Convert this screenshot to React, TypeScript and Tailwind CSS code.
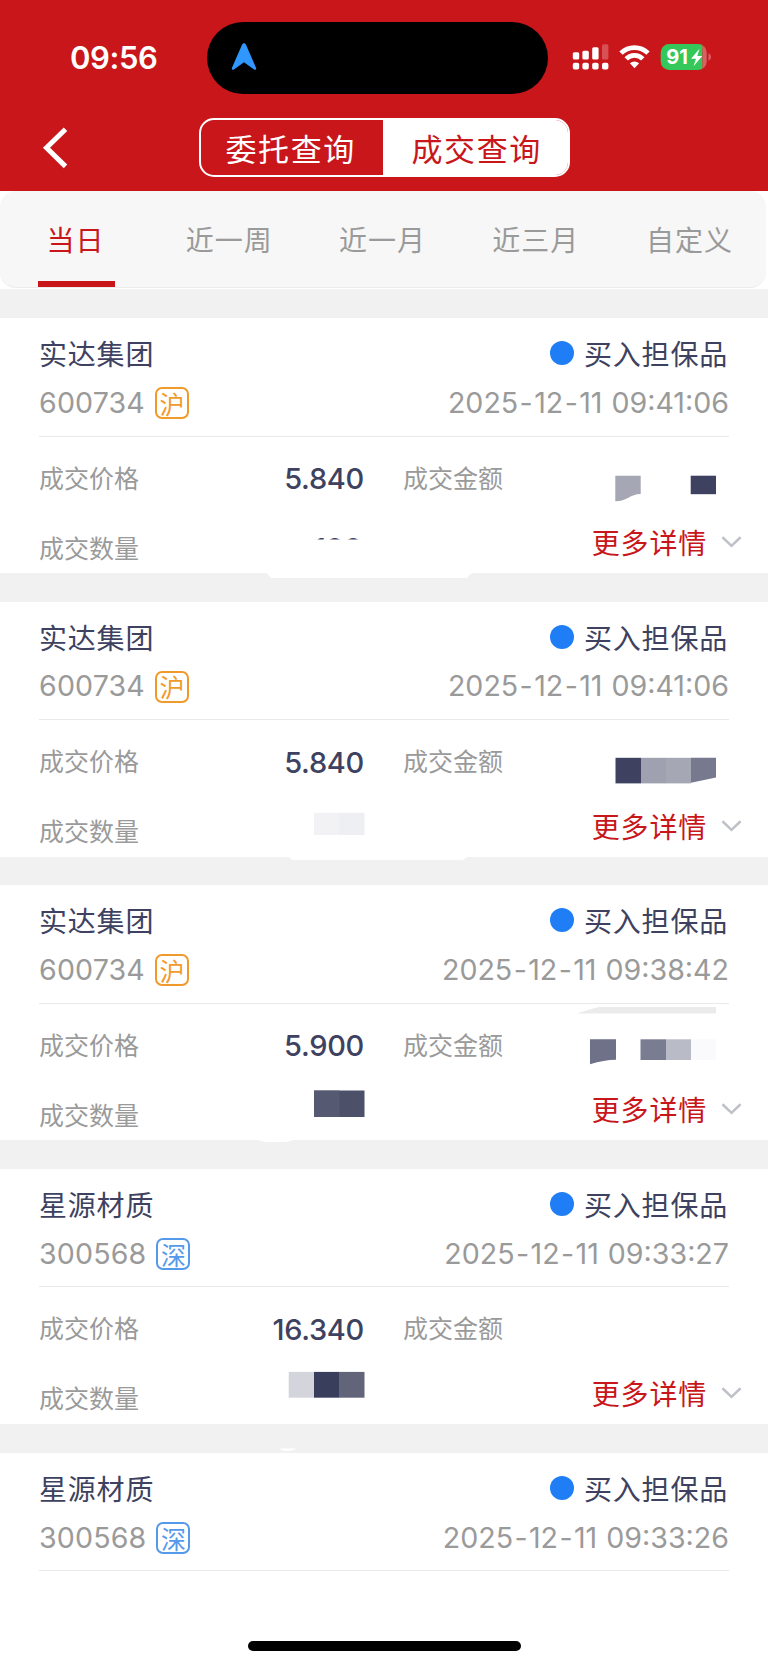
import clsx from 'clsx';

type Block = { d: string; fill: string };

type Trade = {
    id: number;
    name: string;
    code: string;
    market: '沪' | '深';
    date: string;
    time: string;
    price?: string;
    amount?: string;
    blocks: Block[];
};

const TABS = ['当日', '近一周', '近一月', '近三月', '自定义'];

// Coordinates of the masking blocks are relative to the card
const TRADES: Trade[] = [
    {
        id: 1,
        name: '实达集团',
        code: '600734',
        market: '沪',
        date: '2025-12-11',
        time: '09:41:06',
        price: '5.840',
        amount: '100',
        blocks: [
            { d: 'M615.3 157.7H640.7V176C630 176 627 183.3 615.3 183.3Z', fill: '#a5a7b5' },
            { d: 'M690.7 157.7H716V176.2H690.7Z', fill: '#3e4260' },
            { d: 'M265 254H474Q470 256 467 260H271Q268 256 265 254Z', fill: '#ffffff' },
            { d: 'M300 221.5H380V245H300Z', fill: '#ffffff' },
        ],
    },
    {
        id: 2,
        name: '实达集团',
        code: '600734',
        market: '沪',
        date: '2025-12-11',
        time: '09:41:06',
        price: '5.840',
        blocks: [
            { d: 'M615.5 155.8H641V181.4H615.5Z', fill: '#3e4260' },
            { d: 'M641 155.8H666V181.4H641Z', fill: '#9fa1b0' },
            { d: 'M666 155.8H691V181.4H666Z', fill: '#a5a7b4' },
            { d: 'M691 155.8H716V175.6L691 180.8Z', fill: '#777a8f' },
            { d: 'M314 210.8H339V233H314Z', fill: '#f2f2f5' },
            { d: 'M339 210.8H364.5V233H339Z', fill: '#eeeff2' },
            { d: 'M288 254H470Q466 255 463 258H293Q290 257 288 254Z', fill: '#ffffff' },
        ],
    },
    {
        id: 3,
        name: '实达集团',
        code: '600734',
        market: '沪',
        date: '2025-12-11',
        time: '09:38:42',
        price: '5.900',
        blocks: [
            { d: 'M576.5 128.5Q590 124 599 122H716V128.5Z', fill: '#ebebeb' },
            { d: 'M590 154.3H616V174.8Q604 175 590 179.3Z', fill: '#6e7187' },
            { d: 'M640.5 154.3H666V175H640.5Z', fill: '#7a7d92' },
            { d: 'M666 154.3H691V175H666Z', fill: '#b9bbc6' },
            { d: 'M691 154.3H716V175H691Z', fill: '#fafafc' },
            { d: 'M314 205.6H364.5V232H314Z', fill: '#4c5069' },
            { d: 'M314 205.6H339.5V232H314Z', fill: '#555972' },
            { d: 'M257 254H295Q290 257 285 257H265Q261 257 257 254Z', fill: '#ffffff' },
        ],
    },
    {
        id: 4,
        name: '星源材质',
        code: '300568',
        market: '深',
        date: '2025-12-11',
        time: '09:33:27',
        price: '16.340',
        blocks: [
            { d: 'M288.7 202.9H314V228.7H288.7Z', fill: '#d4d5dc' },
            { d: 'M314 202.9H339V228.7H314Z', fill: '#3a3e5d' },
            { d: 'M339 202.9H364.5V228.7H339Z', fill: '#626579' },
            { d: 'M279 279.5H296Q292 282 287 282Q283 282 279 279.5Z', fill: '#ffffff' },
        ],
    },
    {
        id: 5,
        name: '星源材质',
        code: '300568',
        market: '深',
        date: '2025-12-11',
        time: '09:33:26',
        blocks: [],
    },
];

function StatusBar() {
    return (
        <div className="flex h-[116px] items-start">
            <div className="w-[206.5px] pt-[37px] pl-[70px] font-['Inter'] text-[31px] leading-[42px] font-semibold tracking-[-0.4px] text-white">
                09:56
            </div>
            {/* Dynamic island */}
            <div className="mt-[22px] h-[72px] w-[341.5px] rounded-full bg-black pt-[20px] pl-[24px]">
                <svg className="h-[29px] w-[26px]" viewBox="0 0 26 29">
                    <path
                        d="M13 1.2C13.8 1.2 14.6 1.8 15 2.7L25.1 26C25.6 27.4 24.3 28.4 23.1 27.5L13 20.3L2.9 27.5C1.7 28.4 .4 27.4 .9 26L11 2.7C11.4 1.8 12.2 1.2 13 1.2Z"
                        fill="#2f97ff"
                    />
                </svg>
            </div>
            <div className="mt-[40px] ml-[22px] flex h-[34px]">
                {/* Dual SIM signal */}
                <svg className="h-[34px] w-[42px]" viewBox="0 0 42 34" fill="#fff">
                    <rect x="2.8" y="12.3" width="6.4" height="7.2" rx="1.5" />
                    <rect x="12.4" y="10.8" width="6.4" height="8.7" rx="1.5" />
                    <rect x="22.2" y="7.3" width="6.4" height="12.2" rx="1.5" />
                    <rect x="32" y="4.3" width="6.4" height="15.2" rx="1.5" opacity="0.25" />
                    <rect x="2.8" y="22.8" width="6.4" height="6.8" rx="1.8" />
                    <rect x="12.4" y="22.8" width="6.4" height="6.8" rx="1.8" />
                    <rect x="22.2" y="22.8" width="6.4" height="6.8" rx="1.8" />
                    <rect x="32" y="22.8" width="6.4" height="6.8" rx="1.8" />
                </svg>
                <svg className="ml-[6px] h-[34px] w-[34px]" viewBox="0 0 34 34" fill="none" stroke="#fff" strokeWidth="4.8">
                    <path d="M3 13.1A19.2 19.2 0 0 1 30 13.1" />
                    <path d="M8.2 18.9A11.6 11.6 0 0 1 24.8 18.9" />
                    <path d="M11.9 23.3A6.6 6.6 0 0 1 21.1 23.3L16.5 28.2Z" fill="#fff" stroke="none" />
                </svg>
                {/* Battery */}
                <svg className="ml-[7px] h-[34px] w-[54px]" viewBox="0 0 54 34">
                    <defs>
                        <clipPath id="battery">
                            <rect x="1.7" y="4" width="46" height="26" rx="8.5" />
                        </clipPath>
                    </defs>
                    <g clipPath="url(#battery)">
                        <rect x="1" y="4" width="42.5" height="26" fill="#34c759" />
                        <rect x="43.5" y="4" width="5" height="26" fill="#d95f62" />
                    </g>
                    <path d="M49.5 13Q52.1 14.5 52.1 17Q52.1 19.5 49.5 21Z" fill="#d95f62" />
                    <text x="7.3" y="24.2" className="font-['Inter'] text-[20px] font-bold" fill="#fff">
                        91
                    </text>
                    <path d="M40.5 8.8L32 18.7H37L34.5 26.3L43.3 16H38.3Z" fill="#fff" />
                </svg>
            </div>
        </div>
    );
}

function NavBar() {
    return (
        <div className="flex pt-[2px]">
            <svg className="mt-[8px] ml-[40px] h-[44px] w-[30px]" viewBox="0 0 30 44" fill="none" stroke="#fff" strokeWidth="5">
                <path d="M25.5 3.2L6.5 21.8L25.5 40.4" />
            </svg>
            <div className="ml-[128.5px] flex h-[59px] w-[371px] overflow-hidden rounded-[15px] border-2 border-white text-[31px] leading-[55px] tracking-[1.6px]">
                <div className="w-[182px] pl-[25px] text-white">委托查询</div>
                <div className="flex-1 bg-white pl-[29px] text-[#c8161b]">成交查询</div>
            </div>
        </div>
    );
}

function Tabs() {
    return (
        <div className="h-[98px] shrink-0 bg-white">
            <div className="flex h-[96.5px] w-[766px] rounded-[16px] border-b border-[#ececec] bg-[#f7f7f7]">
                {TABS.map((tab, i) => (
                    <div key={tab} className="flex w-[153.4px] flex-col items-center">
                        <div
                            className={clsx(
                                'h-[90px] pt-[27px] text-[28px] leading-[42px] tracking-[1px]',
                                i === 0 ? 'mr-[2px] text-[#c8161b]' : 'text-[#9a9a9a]',
                                i > 0 && i < 4 && 'mr-[1px]',
                            )}
                        >
                            {tab}
                        </div>
                        {i === 0 && <div className="h-[6px] w-[77px] bg-[#c8161b]" />}
                    </div>
                ))}
            </div>
        </div>
    );
}

function DateTime({ date, time }: { date: string; time: string }) {
    return (
        <span className="flex">
            {date.split('-').map((part, i) => (
                <span key={i}>
                    {i > 0 && <span className="mx-[1.4px]">-</span>}
                    {part}
                </span>
            ))}
            <span className="ml-[9px]">{time}</span>
        </span>
    );
}

function TradeCard({ trade }: { trade: Trade }) {
    return (
        <div className="relative h-[283.6px] shrink-0">
            <div className="h-[254.7px] bg-white px-[39px] pt-[15px]">
                <div className="flex h-[40px] items-center justify-between text-[28px] tracking-[0.8px] text-[#3e4260]">
                    <span>{trade.name}</span>
                    <span className="mr-[1px] flex items-center">
                        <i className="mr-[10px] size-[24px] rounded-full bg-[#1f7df5]" />
                        买入担保品
                    </span>
                </div>
                <div className="mt-[10px] flex h-[40px] items-center justify-between font-['Inter'] text-[28.6px] text-[#9a9a9a]">
                    <span className="flex items-center">
                        <span className="tracking-[0.15px]">{trade.code}</span>
                        <i
                            className={clsx(
                                "ml-[10px] flex h-[32px] w-[34px] items-center justify-center rounded-[7px] border-2 font-['Noto_Sans_CJK_SC'] text-[25px] leading-none not-italic",
                                trade.market === '沪' ? 'border-[#f09a2c] text-[#f09a2c]' : 'border-[#5599ea] text-[#5599ea]',
                            )}
                        >
                            {trade.market}
                        </i>
                    </span>
                    <DateTime date={trade.date} time={trade.time} />
                </div>
                <div className="mt-[12.4px] h-px w-[690px] bg-[#e9e9e9]" />
                {trade.price && (
                    <>
                        <div className="mt-[20.6px] flex h-[40px] items-center text-[25px] text-[#9a9a9a]">
                            <span className="w-[120px]">成交价格</span>
                            <span className="w-[205px] pt-[3px] text-right font-['Inter'] text-[29px] font-[450] tracking-[-0.3px] text-[#3e4260]">
                                {trade.price}
                            </span>
                            <span className="ml-[39px]">成交金额</span>
                        </div>
                        <div className="mt-[30px] flex h-[40px] items-center text-[25px] text-[#9a9a9a]">
                            <span className="w-[120px]">成交数量</span>
                            <span className="w-[203px] pt-[3px] text-right font-['Inter'] text-[28px] font-[450] text-[#3e4260]">
                                {trade.amount}
                            </span>
                            <span className="-mt-[10px] ml-auto flex items-center text-[28px] tracking-[0.8px] text-[#c8161b]">
                                更多详情
                                <svg className="-mr-[13px] ml-[14px] h-[14px] w-[21px]" viewBox="0 0 22 14" fill="none" stroke="#bfc1c8" strokeWidth="2.6">
                                    <path d="M1.5 2L11 11L20.5 2" />
                                </svg>
                            </span>
                        </div>
                    </>
                )}
            </div>
            <svg className="absolute inset-0 h-[284px] w-[768px]" viewBox="0 0 768 284">
                {trade.blocks.map((block) => (
                    <path key={block.d} d={block.d} fill={block.fill} />
                ))}
            </svg>
        </div>
    );
}

export default function App() {
    return (
        <div className="relative flex h-[1667px] w-[768px] flex-col overflow-hidden bg-white font-['Noto_Sans_CJK_SC',sans-serif]">
            <header className="h-[191px] shrink-0 bg-[#c8161b]">
                <StatusBar />
                <NavBar />
            </header>
            <Tabs />
            <main className="flex h-[1164px] shrink-0 flex-col bg-[#f1f1f1] pt-[29.3px]">
                {TRADES.slice(0, 4).map((trade) => (
                    <TradeCard key={trade.id} trade={trade} />
                ))}
            </main>
            <TradeCard trade={TRADES[4]} />
            {/* Home indicator */}
            <div className="absolute top-[1641px] left-[247.5px] h-[10px] w-[273.5px] rounded-full bg-black" />
        </div>
    );
}
